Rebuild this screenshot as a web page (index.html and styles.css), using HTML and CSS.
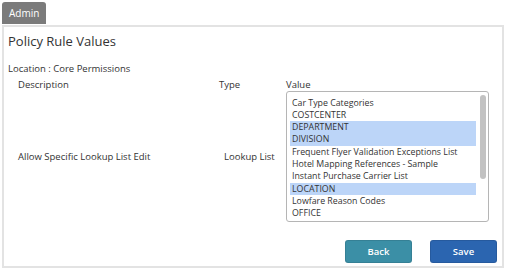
FILE: index.html
```html
<!DOCTYPE html>
<html>
<head>
<meta charset="utf-8">
<link rel="stylesheet" href="styles.css">
</head>
<body>
<div class="tab">Admin</div>
<div class="panel">
  <h1 class="title">Policy Rule Values</h1>
  <div class="location">Location : Core Permissions</div>
  <div class="grid">
    <div class="head">Description</div>
    <div class="head">Type</div>
    <div class="head">Value</div>
    <div class="cell">Allow Specific Lookup List Edit</div>
    <div class="cell type">Lookup List</div>
    <div class="listbox">
      <div class="items">
        <div class="item">Car Type Categories</div>
        <div class="item">COSTCENTER</div>
        <div class="item sel">DEPARTMENT</div>
        <div class="item sel">DIVISION</div>
        <div class="item">Frequent Flyer Validation Exceptions List</div>
        <div class="item">Hotel Mapping References - Sample</div>
        <div class="item">Instant Purchase Carrier List</div>
        <div class="item sel">LOCATION</div>
        <div class="item">Lowfare Reason Codes</div>
        <div class="item">OFFICE</div>
      </div>
      <div class="track"><div class="thumb"></div></div>
    </div>
  </div>
  <div class="actions">
    <button class="btn back">Back</button>
    <button class="btn save">Save</button>
  </div>
</div>
</body>
</html>
```
FILE: styles.css
```css
* { box-sizing: border-box; }
body {
  margin: 0;
  font-family: "Open Sans", sans-serif;
  color: #333;
  background: #fff;
}
.tab {
  display: inline-block;
  margin: 2px 0 0 2px;
  height: 22px;
  padding: 0 7px;
  line-height: 22px;
  font-size: 10px;
  color: #fff;
  background: #7b7b7b;
  border-radius: 3px 3px 0 0;
  vertical-align: top;
}
.panel {
  margin: 1px 5px 0 2px;
  height: 243px;
  border: 2px solid #e3e3e3;
  padding: 5px 0 0 4px;
  display: flex;
  flex-direction: column;
}
.title {
  margin: 0;
  font-size: 13px;
  font-weight: normal;
  line-height: 18px;
  color: #333;
}
.location {
  margin-top: 12px;
  font-size: 9.5px;
  line-height: 13px;
}
.grid {
  display: grid;
  grid-template-columns: 201px 67px 203px;
  row-gap: 1px;
  align-items: center;
  margin-left: 10px;
  font-size: 9.5px;
  margin-top: 4px;
}
.head { line-height: 11px; }
.type { padding-left: 5px; }
.listbox {
  display: flex;
  height: 131px;
  border: 1px solid #b5b5b5;
  border-radius: 3px;
  overflow: hidden;
  padding: 3px 0 0 3px;
}
.items { flex: 1; padding-top: 1.5px; }
.item {
  height: 12.3px;
  line-height: 12.3px;
  padding-left: 2px;
  white-space: nowrap;
  font-size: 8.8px;
}
.item.sel { background: #bcd5f8; }
.track {
  width: 10px;
  margin-left: 2px;
  padding: 0 2px;
}
.thumb {
  height: 84px;
  border-radius: 3px;
  background: #c2c2c2;
}
.actions {
  margin-top: auto;
  margin-bottom: 3px;
  display: flex;
  justify-content: flex-end;
  gap: 18px;
  padding-right: 5px;
}
.btn {
  width: 67px;
  height: 23px;
  border: 1px solid rgba(0,0,0,0.1);
  border-radius: 3px;
  color: #fff;
  font-family: "Open Sans", sans-serif;
  font-size: 9.5px;
  font-weight: 600;
}
.back { background: #3b8fa6; }
.save { background: #2b65b0; }
```
